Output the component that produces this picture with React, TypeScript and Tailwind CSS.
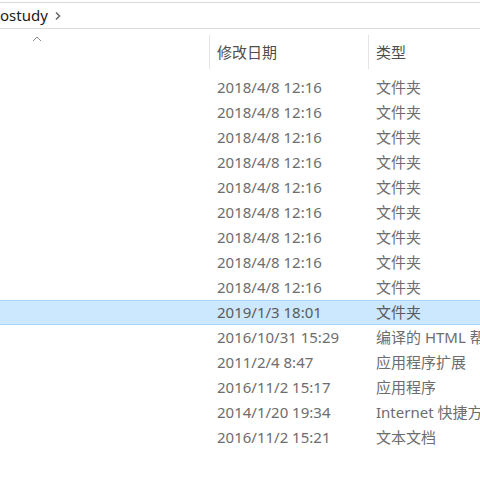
import React from "react";

const rows: [string, string][] = [
  ["2018/4/8 12:16", "文件夹"],
  ["2018/4/8 12:16", "文件夹"],
  ["2018/4/8 12:16", "文件夹"],
  ["2018/4/8 12:16", "文件夹"],
  ["2018/4/8 12:16", "文件夹"],
  ["2018/4/8 12:16", "文件夹"],
  ["2018/4/8 12:16", "文件夹"],
  ["2018/4/8 12:16", "文件夹"],
  ["2018/4/8 12:16", "文件夹"],
  ["2019/1/3 18:01", "文件夹"],
  ["2016/10/31 15:29", "编译的 HTML 帮助文件"],
  ["2011/2/4 8:47", "应用程序扩展"],
  ["2016/11/2 15:17", "应用程序"],
  ["2014/1/20 19:34", "Internet 快捷方式"],
  ["2016/11/2 15:21", "文本文档"],
];

function App() {
  return (
    <div
      className="w-[480px] h-[480px] bg-white overflow-hidden whitespace-nowrap text-[15px]"
      style={{ fontFamily: '"Noto Sans", "Noto Sans CJK SC", sans-serif' }}
    >
      {/* address bar */}
      <div className="h-[2px]" />
      <div className="h-[27px] border-t border-b border-[#d9d9d9] flex items-center">
        <span className="text-[#1a1a1a] leading-none">ostudy</span>
        <svg width="8" height="10" viewBox="0 0 8 10" className="ml-[6px] shrink-0">
          <path d="M2 1.5 L5.5 5 L2 8.5" fill="none" stroke="#6b6b6b" strokeWidth="1.6" />
        </svg>
      </div>

      {/* column headers */}
      <div className="h-[46px] flex">
        <div className="w-[209px] shrink-0 relative">
          <svg width="10" height="6" viewBox="0 0 10 6" className="absolute left-[32px] top-[7px]">
            <path d="M1 5 L5 1 L9 5" fill="none" stroke="#8a8a8a" strokeWidth="1" />
          </svg>
        </div>
        <div className="w-[159px] shrink-0 flex items-center border-l border-[#e5e5e5] my-[6px] pl-[7px] text-[#4d4d4d]">
          修改日期
        </div>
        <div className="flex-1 flex items-center border-l border-[#e5e5e5] my-[6px] pl-[7px] text-[#4d4d4d]">
          类型
        </div>
      </div>

      {/* rows */}
      <div className="flex flex-col">
        {rows.map(([date, type], i) => (
          <div
            key={i}
            className={
              i === 9
                ? "h-[25px] flex items-center bg-[#cce8ff] border-y border-[#a9d4f5] text-[#5a5a5a]"
                : "h-[25px] flex items-center text-[#6d6d6d]"
            }
          >
            <div className="w-[217px] shrink-0" />
            <div className="w-[159px] shrink-0">{date}</div>
            <div className="shrink-0">{type}</div>
          </div>
        ))}
      </div>
    </div>
  );
}

export default App;
